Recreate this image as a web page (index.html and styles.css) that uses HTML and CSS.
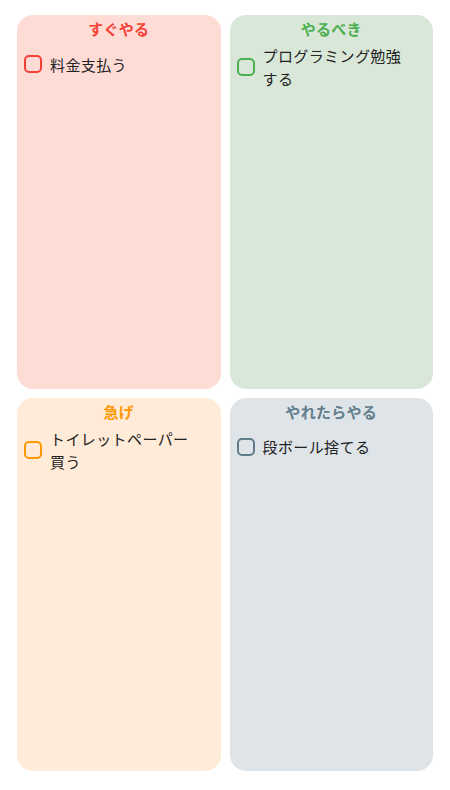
FILE: index.html
```html
<!DOCTYPE html>
<html lang="ja">
<head>
    <meta charset="UTF-8">
    <meta name="viewport" content="width=device-width, initial-scale=1.0">
    <title>マトリクス</title>
    <link rel="stylesheet" href="styles.css">
</head>
<body>
    <div class="matrix">
        <section class="quad quad-red">
            <h2 class="quad-title">すぐやる</h2>
            <ul class="todo-list">
                <li class="todo"><span class="check"></span><span class="todo-text">料金支払う</span></li>
            </ul>
        </section>
        <section class="quad quad-green">
            <h2 class="quad-title">やるべき</h2>
            <ul class="todo-list">
                <li class="todo"><span class="check"></span><span class="todo-text">プログラミング勉強する</span></li>
            </ul>
        </section>
        <section class="quad quad-orange">
            <h2 class="quad-title">急げ</h2>
            <ul class="todo-list">
                <li class="todo"><span class="check"></span><span class="todo-text">トイレットペーパー買う</span></li>
            </ul>
        </section>
        <section class="quad quad-grey">
            <h2 class="quad-title">やれたらやる</h2>
            <ul class="todo-list">
                <li class="todo"><span class="check"></span><span class="todo-text">段ボール捨てる</span></li>
            </ul>
        </section>
    </div>
</body>
</html>
```

FILE: styles.css
```css
body {
    margin: 0;
    padding: 0;
    font-family: "Noto Sans CJK JP", "Noto Sans", sans-serif;
    background-color: #fff;
    color: #222;
}

.matrix {
    display: grid;
    grid-template-columns: 1fr 1fr;
    grid-template-rows: 1fr 1fr;
    gap: 9px;
    height: 790px;
    padding: 15px 17px 19px;
    box-sizing: border-box;
}

.quad {
    border-radius: 16px;
    padding: 0 22px 0 7px;
    display: flex;
    flex-direction: column;
}

.quad-title {
    margin: 0;
    height: 29px;
    line-height: 28px;
    font-size: 15px;
    font-weight: bold;
    text-align: center;
    letter-spacing: 0.3px;
    padding-left: 15px;
}

.todo-list {
    list-style: none;
    margin: 0;
    padding: 0;
}

.todo {
    display: flex;
    align-items: center;
    gap: 8px;
    min-height: 40px;
    font-size: 15px;
    line-height: 23px;
    letter-spacing: 0.4px;
}

.check {
    flex: none;
    width: 18px;
    height: 18px;
    border: 2px solid currentColor;
    border-radius: 5px;
    box-sizing: border-box;
}

.todo-text {
    color: #222;
}

.quad-red { background-color: #ffdbd6; color: #f44336; }
.quad-green { background-color: #d9e7d9; color: #4caf50; }
.quad-orange { background-color: #ffebd8; color: #ff9800; }
.quad-grey { background-color: #dfe4e8; color: #607d8b; }
```
